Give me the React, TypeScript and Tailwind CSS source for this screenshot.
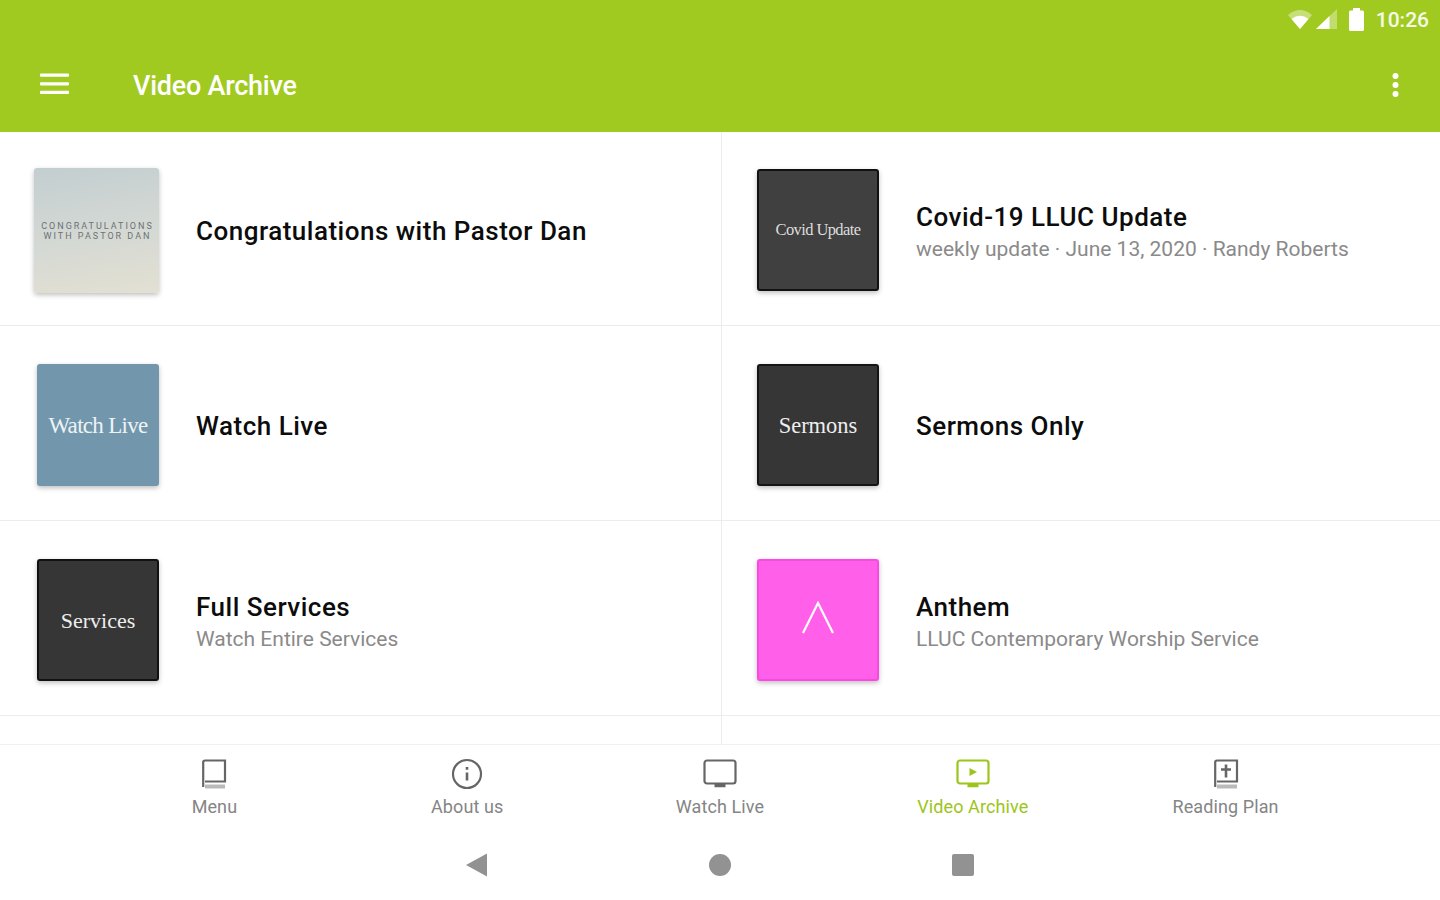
import React from 'react';
import clsx from 'clsx';

const StatusBar = () => (
  <div className="flex h-[38px] items-center justify-end pr-[11px]">
    <svg width="24" height="19" viewBox="0 0 24 19" fill="#fff">
      <path d="M0 5 Q12 -5 24 5 L12 19 Z" opacity="0.4" />
      <path d="M3.5 9 Q12 2.5 20.5 9 L12 19 Z" />
    </svg>
    <svg width="21" height="20" viewBox="0 0 21 20" fill="#fff" className="ml-1">
      <path d="M21 0 V20 H0 Z" opacity="0.35" />
      <path d="M13.5 7 V20 H0 Z" />
    </svg>
    <svg width="15" height="23" viewBox="0 0 15 23" fill="#fff" className="ml-3">
      <path d="M4 0 H11 V2.5 H13.5 Q15 2.5 15 4 V21.5 Q15 23 13.5 23 H1.5 Q0 23 0 21.5 V4 Q0 2.5 1.5 2.5 H4 Z" />
    </svg>
    <span className="ml-3 pt-0.5 text-[21px] leading-none font-medium text-white/90">10:26</span>
  </div>
);

const Header = () => (
  <header className="h-[132px] shrink-0 bg-[#a1ca20]">
    <StatusBar />
    <div className="flex h-[94px] items-center pr-[41px] pl-10 text-white">
      <svg width="29" height="22" viewBox="0 0 29 22" fill="currentColor" className="mb-[2px]">
        <rect y="0.5" width="29" height="3.2" rx="0.8" />
        <rect y="9.2" width="29" height="3.2" rx="0.8" />
        <rect y="17.8" width="29" height="3.2" rx="0.8" />
      </svg>
      <h1 className="ml-16 pt-[3px] text-[27px] font-medium tracking-[-0.25px]">Video Archive</h1>
      <svg width="7" height="26" viewBox="0 0 7 26" fill="currentColor" className="ml-auto">
        <circle cx="3.5" cy="4" r="3" />
        <circle cx="3.5" cy="13" r="3" />
        <circle cx="3.5" cy="22" r="3" />
      </svg>
    </div>
  </header>
);

const serif = "font-['Liberation_Serif',serif]";

const items = [
  {
    title: 'Congratulations with Pastor Dan',
    thumb: '-ml-[3px] mt-px size-[125px] bg-linear-170 from-[#c3ced0] via-[#d3d8d4] to-[#e3e0d2]',
    art: (
      <div className="pl-0.5 text-center text-[9px] leading-[10px] whitespace-nowrap text-[#6b7272]">
        <div className="tracking-[2px]">CONGRATULATIONS</div>
        <div className="tracking-[2px]">WITH PASTOR DAN</div>
      </div>
    ),
  },
  {
    title: 'Covid-19 LLUC Update',
    subtitle: 'weekly update · June 13, 2020 · Randy Roberts',
    thumb: 'size-[122px] bg-[#404040] border-2 border-[#111]',
    art: <span className={clsx(serif, 'pt-px text-[16.5px] tracking-[-0.6px] text-[#ddd]')}>Covid Update</span>,
  },
  {
    title: 'Watch Live',
    thumb: 'size-[122px] bg-[#7297ad]',
    art: <span className={clsx(serif, 'pt-0.5 text-[23px] tracking-[-0.7px] text-[#eef3f6]')}>Watch Live</span>,
  },
  {
    title: 'Sermons Only',
    thumb: 'size-[122px] bg-[#363636] border-2 border-[#151515]',
    art: <span className={clsx(serif, 'pt-0.5 text-[22.5px] text-[#eee]')}>Sermons</span>,
  },
  {
    title: 'Full Services',
    subtitle: 'Watch Entire Services',
    thumb: 'size-[122px] bg-[#363636] border-2 border-[#111]',
    art: <span className={clsx(serif, 'text-[22px] text-[#eee]')}>Services</span>,
  },
  {
    title: 'Anthem',
    subtitle: 'LLUC Contemporary Worship Service',
    thumb: 'size-[122px] bg-[#ff5fe9] border-2 border-[#fb48e2]',
    art: (
      <svg width="32" height="33" viewBox="0 0 32 33" fill="none" stroke="#fff" strokeWidth="2.2" className="mb-1.5">
        <path d="M1 32 L16 2 L31 32" />
      </svg>
    ),
  },
];

const VideoRow = ({ item, left }: any) => (
  <div
    className={clsx(
      'flex h-[195px] items-center border-b border-[#ececec] pt-1',
      left ? 'border-r pl-[37px]' : 'pl-[35px]'
    )}
  >
    <div
      className={clsx(
        'flex shrink-0 items-center justify-center overflow-hidden rounded-[3px] shadow-[0_2px_5px_rgba(0,0,0,0.25)]',
        item.thumb
      )}
    >
      {item.art}
    </div>
    <div className={clsx('ml-[37px]', item.subtitle ? 'pt-1' : 'pt-0.5')}>
      <h2 className="text-[26px] leading-[34px] font-medium tracking-[0.5px] text-[#0c0c0c]">{item.title}</h2>
      {item.subtitle && <p className="text-[21px] leading-[30px] text-[#8a8a8a]">{item.subtitle}</p>}
    </div>
  </div>
);

const BookIcon = ({ children }: any) => (
  <svg width="26" height="32" viewBox="0 0 26 32" fill="none" stroke="currentColor" strokeWidth="2.2">
    <path d="M2.2 29 V4 Q2.2 2.5 4 2.5 H24 V23.5 H4" />
    <path d="M4 28.5 H24" strokeWidth="4" opacity="0.45" />
    {children}
  </svg>
);

const TvIcon = ({ children }: any) => (
  <svg width="34" height="32" viewBox="0 0 34 32" fill="none" stroke="currentColor" strokeWidth="2.2">
    <rect x="1.5" y="2.5" width="31" height="23" rx="2.5" />
    <path d="M11.5 27.5 H22.5" strokeWidth="3.5" />
    {children}
  </svg>
);

const tabs = [
  { label: 'Menu', icon: <BookIcon /> },
  {
    label: 'About us',
    icon: (
      <svg width="32" height="32" viewBox="0 0 32 32" fill="none" stroke="currentColor" strokeWidth="2.2">
        <circle cx="16" cy="16" r="14" />
        <path d="M16 14.5 V22.5 M16 9 V11.8" strokeWidth="2.6" />
      </svg>
    ),
  },
  { label: 'Watch Live', icon: <TvIcon /> },
  {
    label: 'Video Archive',
    active: true,
    icon: (
      <TvIcon>
        <path d="M13.5 10 L21 14 L13.5 18 Z" fill="currentColor" stroke="none" />
      </TvIcon>
    ),
  },
  {
    label: 'Reading Plan',
    icon: (
      <BookIcon>
        <path d="M13 6.5 V19.5 M8 11.5 H18" strokeWidth="2.6" />
      </BookIcon>
    ),
  },
];

const TabBar = () => (
  <nav className="grid h-[85px] shrink-0 grid-cols-5 border-t border-[#f0f0f0] px-[88px] pt-[13px]">
    {tabs.map(tab => (
      <div
        key={tab.label}
        className={clsx('flex flex-col items-center', tab.active ? 'text-[#9cc51a]' : 'text-[#666]')}
      >
        {tab.icon}
        <span className={clsx('mt-[7px] text-[18px] leading-5 tracking-[0.1px]', !tab.active && 'text-[#858585]')}>
          {tab.label}
        </span>
      </div>
    ))}
  </nav>
);

const SystemNav = () => (
  <div className="flex h-[71px] items-center justify-center gap-[221px] text-[#929292]">
    <svg width="22" height="24" viewBox="0 0 22 24" fill="currentColor">
      <path d="M0 12 L21 0.5 V23.5 Z" />
    </svg>
    <div className="size-[22px] rounded-full bg-current" />
    <div className="size-[22px] rounded-[2px] bg-current" />
  </div>
);

export default function App() {
  return (
    <div className="flex h-[900px] w-[1440px] flex-col overflow-hidden bg-white font-['Roboto',sans-serif]">
      <Header />
      <main className="h-[612px] shrink-0 overflow-hidden">
        <div className="-mt-px grid grid-cols-[722px_1fr]">
          {items.map((item, i) => (
            <VideoRow key={item.title} item={item} left={i % 2 === 0} />
          ))}
          <div className="h-[60px] border-r border-[#ececec]" />
        </div>
      </main>
      <TabBar />
      <SystemNav />
    </div>
  );
}
